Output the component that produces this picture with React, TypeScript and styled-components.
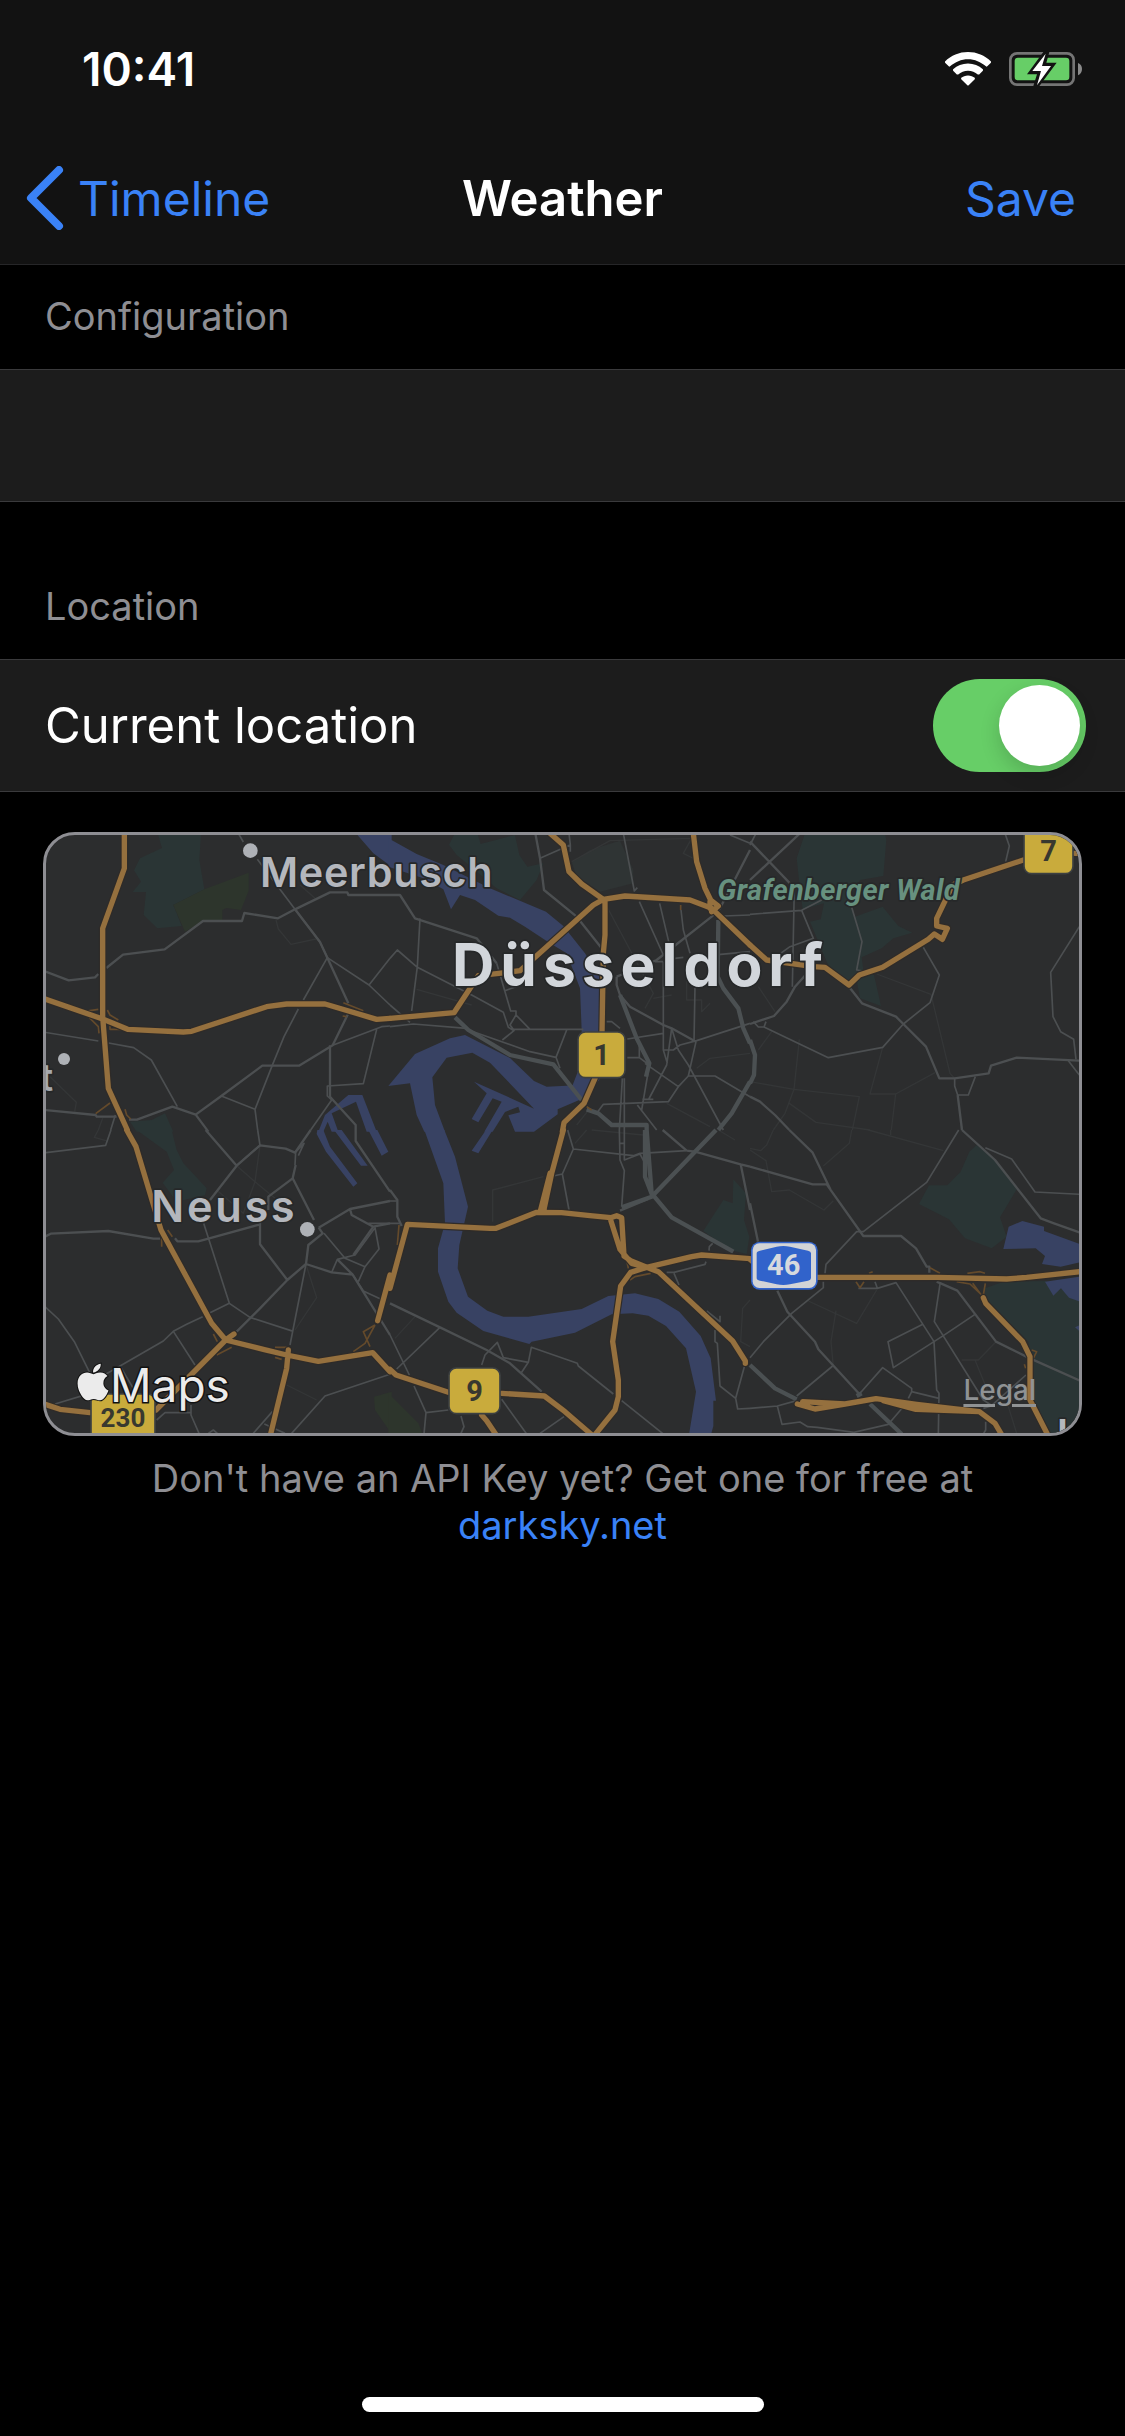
import React, { useState } from "react";
import styled, { createGlobalStyle } from "styled-components";
import { FaApple } from "react-icons/fa";

const color = {
  bar: "#121212",
  row: "#1c1c1c",
  hairline: "#3a3a3c",
  barLine: "#262628",
  secondary: "#8e8e93",
  blue: "#3a82f7",
  green: "#67ce67",
};

const GlobalStyle = createGlobalStyle`
  *, *::before, *::after { box-sizing: border-box; }
  body { margin: 0; background: #000; }
  button, input { font: inherit; color: inherit; }
`;

const Screen = styled.div`
  display: flex;
  flex-direction: column;
  min-height: 100vh;
  background: #000;
  color: #fff;
  font-family: Inter, "Liberation Sans", sans-serif;
  font-size: 49px;
`;

const Header = styled.header`
  background: ${color.bar};
  border-bottom: 1px solid ${color.barLine};
`;

const StatusBar = styled.div`
  display: flex;
  align-items: center;
  justify-content: space-between;
  height: 132px;
  padding: 6px 43px 0 82px;
`;

const Clock = styled.time`
  font-size: 46px;
  font-weight: 600;
`;

const StatusIcons = styled.div`
  display: flex;
  align-items: center;
  gap: 18px;
`;

const NavBar = styled.nav`
  display: grid;
  grid-template-columns: 1fr auto 1fr;
  align-items: center;
  height: 132px;
  padding: 0 26px;
`;

const Title = styled.h1`
  margin: 0;
  font-size: 49px;
  font-weight: 600;
`;

const BarButton = styled.button<{ $end?: boolean }>`
  display: flex;
  align-items: center;
  gap: 14px;
  justify-self: ${(p) => (p.$end ? "end" : "start")};
  padding: 0 ${(p) => (p.$end ? "23px" : "0")} 0 0;
  border: 0;
  background: none;
  color: ${color.blue};
  font-size: 48px;
  cursor: pointer;
`;

const Main = styled.main`
  flex: 1;
`;

const Section = styled.section`
  & + & {
    margin-top: 53px;
  }
`;

const SectionTitle = styled.h2`
  display: flex;
  align-items: center;
  height: 104px;
  margin: 0;
  padding: 0 45px 2px;
  color: ${color.secondary};
  font-size: 38px;
  font-weight: 400;
`;

const Row = styled.div`
  display: flex;
  align-items: center;
  justify-content: space-between;
  height: 133px;
  padding: 0 39px 0 45px;
  background: ${color.row};
  border: solid ${color.hairline};
  border-width: 1px 0;
`;

const KeyField = styled.input`
  flex: 1;
  min-width: 0;
  height: 100%;
  padding: 0;
  border: 0;
  outline: 0;
  background: transparent;
`;

const Toggle = styled.input`
  appearance: none;
  display: flex;
  width: 153px;
  height: 93px;
  margin: 0;
  padding: 6px;
  border-radius: 47px;
  background: #39393d;
  cursor: pointer;

  &::before {
    content: "";
    width: 81px;
    height: 81px;
    border-radius: 50%;
    background: #fff;
    box-shadow: 0 8px 20px rgba(0, 0, 0, 0.16);
  }
  &:checked {
    justify-content: flex-end;
    background: ${color.green};
  }
`;

const MapFrame = styled.div`
  position: relative;
  margin: 40px 43px 0;
  border: 3px solid ${color.secondary};
  border-radius: 32px;
  overflow: hidden;
  background: #2c2d2e;
`;

const MapDrawing = styled.svg`
  display: block;
  width: 100%;
  height: auto;
`;

const MapCredits = styled.div`
  position: absolute;
  left: 30px;
  right: 43px;
  bottom: 16px;
  display: flex;
  align-items: flex-end;
  justify-content: space-between;
`;

const MapsBrand = styled.span`
  display: flex;
  align-items: flex-end;
  color: #ebebeb;
  font-size: 46px;
  line-height: 56px;
  padding-bottom: 4px;
  font-weight: 400;
  -webkit-text-stroke: 3px #111;
  paint-order: stroke fill;

  svg {
    width: 34px;
    height: 42px;
    margin-bottom: 10px;
    overflow: visible;
    stroke: #111;
    stroke-width: 24px;
    paint-order: stroke;
  }
`;

const LegalLink = styled.a`
  padding-bottom: 10px;
  color: #8f9294;
  font-size: 28px;
  font-weight: 500;
  text-decoration: underline;
  text-decoration-thickness: 3px;
  text-underline-offset: 4px;
`;

const Note = styled.p`
  margin: 19px 43px 0;
  color: ${color.secondary};
  font-size: 38px;
  line-height: 47px;
  text-align: center;
`;

const NoteLink = styled.a`
  display: block;
  color: ${color.blue};
  text-decoration: none;
`;

const HomeArea = styled.footer`
  display: flex;
  justify-content: center;
  padding-bottom: 24px;
`;

const HomeIndicator = styled.div`
  width: 402px;
  height: 15px;
  border-radius: 8px;
  background: #fff;
`;

/* The map is drawn as six adjoining sheets, each with its own origin. */
type Layer = "park" | "scrub" | "grove" | "water" | "faint" | "minor" | "major" | "heavy" | "ramp" | "highway";
type Sheet = { x: number; y: number } & Partial<Record<Layer, string>>;

const sheets: Sheet[] = [
  {
    x: 0,
    y: 0,
    park: "M383 40H513L508 120L523 208L430 255L455 318L382 325L341 285L348 216H308L333 185L312 151L330 115L396 84ZM300 905L365 900L405 880L430 935H320Z",
    grove: "M430 255L523 208L656 158V212L633 270L590 264L577 270V302L520 303L465 335Z",
    water: "M978 40H1085V140L1030 100ZM865 935L885 885L955 825H997L1040 935H1010L978 845L905 880L925 935H905L893 905L880 935Z",
    minor: "M625 40L640 66M682 118L795 268L870 366L892 413L820 540M45 637L205 663M236 669L311 683L364 720L442 860M805 567L762 650L728 733L675 868L683 930M892 413L1017 495L1080 555M1017 495L1080 415M574 828L675 868M908 676L1055 620L1080 618M1040 628L1000 791L892 798V828L905 840L842 930M256 885L242 930",
    major: "M795 268L870 366L892 413L955 550M45 454L116 481L195 472L205 462M229 444L279 404L404 388L519 303H636L643 279L744 295L795 268L900 217H952L955 225H1080M955 580L908 676L807 737H728L697 737L574 828L497 884L427 860L321 899H297M497 884L535 935M900 676V830L977 915V930M45 870L197 885L200 890H260",
    faint: "M60 770L139 847L134 875M738 300L745 327L783 373L858 357M810 195L855 235M218 895L205 930",
    ramp: "M160 575L205 568M165 580L205 620L207 640M232 570L240 585L265 600M240 610V628H275M240 849L197 881M940 548L1000 572M938 588L950 590M285 868L290 885L302 897",
    highway: "M283 40V145L218 325V590L235 805L292 930M45 537L218 597L293 628L460 636L485 634L710 560L770 552H885L1040 598L1080 595",
  },
  {
    x: 1080,
    y: 0,
    park: "M195 40H262L272 72L375 45L388 105L412 140L460 130L440 180L390 240L320 205L200 105L177 74Z",
    scrub: "M545 125L600 90L690 62L730 150V190L630 215L560 170Z",
    water: "M-5 55L80 102L160 135L300 205L468 275L520 318L585 400L628 470V780L580 835L503 868V883L432 935H375L355 886L390 877L385 860L345 876L308 935H283L335 845L308 835L265 907L245 897L290 820L252 785L432 866L300 728L247 698L170 713L127 772L135 855L165 935H103L80 885L60 790L-5 798L75 702L180 655L225 645L360 714L432 783L470 800L530 797L548 795L575 725V630L570 505L530 400L480 370L405 320L360 293L325 287L255 240L210 225L183 268L160 208L100 175L-5 140Z",
    minor: "M450 115L540 75M537 40L541 75V95M700 40L733 213L742 203M748 245L820 405M809 250L838 373M873 270L880 330L900 400M90 295L82 440L65 573M0 415L22 390L82 442L245 525L340 577L355 622L372 632L337 660M0 555L60 607M0 620L70 612L230 625M235 630L420 695L498 712L510 745M345 512L378 500M320 430L345 515L362 573H378V585L360 615L370 628H580M378 585L420 628M530 630L498 712M820 425V690H850L870 675L920 662L1080 610M915 500L912 665M820 640L712 657M820 690L832 730M845 625L865 690L895 735L1000 930M845 625L830 735L775 840M918 665L895 768L865 800L835 845L640 853L620 880M895 768H975L1080 830M765 730L865 800M748 675V713H712M748 713L778 735L755 870M742 855L800 930M697 775L688 930M703 775V930M757 838H790M795 425H820M1020 45L1080 70M1000 288L1080 285M855 415L880 412M920 410L1080 395M650 605H665L690 625",
    major: "M436 40L450 115L462 210L560 290L635 385M0 225H30L75 295L260 355L320 430M680 470V495L690 525L720 560L820 615L845 625L918 665M680 470L730 450L800 420L965 290L990 265L1080 90",
    heavy: "M195 592L235 630L360 705L490 733L575 840M985 300L983 470L1000 505L1045 565L1060 625L1080 670M590 868L625 880L665 915H770V930M985 930L1025 880L1080 785M690 525L740 655L778 730L768 770",
    faint: "M545 125L660 62L905 55L880 100L920 120M640 240L790 520L765 565M790 535L845 525M890 440V540H935V575L960 550M80 508L245 555M920 745L960 715L1080 700M830 850L960 920M560 915L600 865",
    ramp: "M872 255V270M590 860L605 870",
    highway: "M480 40L520 75L537 155L575 192L640 238L610 255L390 452L320 461L265 467L192 578L0 595M640 238L705 228L900 240L965 265L1080 375M645 240V345L640 400L636 640M910 40L920 125L945 205L962 240L985 258L965 275M960 245V265M615 775L582 850L522 908L517 935",
  },
  {
    x: 2160,
    y: 0,
    park: "M165 40H405L409 60L400 168L330 180L300 230L315 290L398 260L445 318L487 338L430 355L395 385L335 412L340 450L372 465L393 558L330 535L320 480L290 500L232 430L180 305L212 298L222 250L158 268L147 180L140 115Z",
    minor: "M18 40L0 75M0 283L155 271L215 240M133 200L127 500M155 271L190 355L120 380L78 410M305 262L336 365L320 450L340 453M520 382L568 465L540 548L460 612L398 682L235 713L42 621L48 605M42 621H25L10 605M765 40L778 78L767 125M988 320L902 457L909 590L932 635L971 658L978 718M955 722L988 765M614 775V798L623 825H655L676 770",
    major: "M0 65L120 190M0 180L150 40M297 500L336 550L438 590L460 612L528 680L568 775H614L716 760L723 737L800 713L988 722M623 825L636 930M0 612L72 588L110 545L135 500L178 452M0 830L30 845L75 885L118 930",
    heavy: "M0 660L15 705L12 765L0 790",
    faint: "M380 462L543 523L600 760L614 775M398 682L360 822H437L555 758M437 822L424 930M148 658L132 808L105 880L70 930M0 785L132 808L328 830L307 930M118 850L198 907L360 930M25 690L65 635M25 500L75 575",
    highway: "M0 375L50 420L190 440L225 442L297 495L328 465L398 442L535 358L553 342L577 358L592 325L560 318V295L608 195L640 180L820 120M975 100H990",
  },
  {
    x: 0,
    y: 930,
    park: "M320 0H425L440 60L460 100L530 175L525 195L440 215L398 158L432 120L410 65Z",
    grove: "M1032 800L1085 785V912L1035 840Z",
    water: "M862 0H880L900 50L982 160L970 170L888 65L860 12ZM912 0H935L1013 107H993ZM1015 0H1042L1075 65L1055 77Z",
    minor: "M45 68L227 46L243 0M683 0L690 46L620 107M795 68L822 40L805 77M797 65L795 105M1015 280H1080M905 427L922 388L975 375L1035 293L1047 357L1005 410L985 455M882 310L945 385L1005 410M968 434L1000 483L1050 506M828 402L780 645M521 280L598 520L660 562L790 604M598 520L540 548M518 560L470 583L430 604L400 633L270 708L180 760M430 604L495 705M45 530L85 567L133 635L195 760M270 708L310 775M75 822L180 790M380 870L405 848H483V855L507 910M483 848V825M535 910L550 900L562 910M670 910L727 845M785 910L885 798L1080 733M703 882L765 910",
    major: "M527 0L620 107L540 210M620 107L690 46L767 56L795 68L842 0M797 105L788 145L715 200V240M788 145L852 270M977 0V33L1080 185M866 293L960 237L1080 213M960 237L965 255L1030 290L1080 280M866 293L878 310L835 345L828 402L772 450L690 343V270M828 402L905 427L968 434M922 388L968 434L1080 615M772 450L690 535L620 605M45 320L62 311L235 303L370 326H390M435 325L442 334H505L690 283M1030 290L970 375",
    faint: "M205 0L193 22L228 32M690 46L675 155L620 107M675 155L735 205M675 155L640 250L560 180M830 410L860 503L795 600M770 765L860 810",
    ramp: "M413 300L427 320M395 325V350M550 612L562 635M560 675L605 652M735 652H770M735 682L755 688M1035 585L1000 605L1020 650M1035 585L1005 640L970 665",
    highway: "M290 0L318 50L393 300L545 580L587 630L378 840M587 630L612 612M587 630L700 658L770 675L865 694L1028 668L1080 725M45 823L90 838L180 848M775 660L770 715L722 912M1080 435L1043 572",
  },
  {
    x: 1080,
    y: 930,
    park: "M1030 148L1068 190L1062 270L1078 320L1070 372L1020 360L940 303L1000 210L1028 220Z",
    grove: "M-5 790L85 880L98 912H-5Z",
    water: "M103 0H163L195 80L234 230L208 345L203 415L234 500L292 542L340 560H415L575 537L655 498L735 490L805 507L868 545L932 618L962 685L978 812H970V888L963 914H897L918 785L888 655L828 588L775 557L728 550L665 553L555 608L425 635L418 642L280 603L200 548L175 515L144 425V355L165 280L160 160ZM245 62L288 0H308L265 70Z",
    minor: "M0 213H20M0 280H30M150 592L20 717M0 615L58 735M72 768L108 848L102 912M108 848L175 840M275 705L285 675L322 637L340 683L415 697L424 652L562 700L565 708L670 792M695 812L820 912M415 697L393 730M335 808L410 912M450 910L522 860M213 858L222 890L212 912M533 0L550 57L517 132L490 138M517 132L537 240M550 57L730 77L750 70L890 62M688 0L690 90L703 122L695 230M703 0V90L750 72M690 40H703M750 72L765 100M830 427H852L945 403L948 395M852 430L867 465M957 362L958 350L968 340M950 543L990 575V557M975 600V635L982 640L990 768L1037 805L1063 710M1037 805L1043 837L1080 835",
    major: "M0 180L22 210V260L35 288M0 520L150 592L290 660L360 700L455 785M890 62L915 65L1052 103L1080 110M818 0L890 62M1052 103L1080 240M775 207L690 242",
    heavy: "M770 0L785 190L845 262L1030 365M978 0L785 200L695 232M765 0V140L790 205",
    faint: "M308 275V180L460 140M555 40L590 0M605 0L760 15M985 0L1035 30M15 625L75 560M1080 510L1058 535L1052 635L1080 650",
    ramp: "M27 285L22 345M710 390L715 415M720 450L735 440L782 430",
    highway: "M0 475L52 283L300 295H318L440 247L515 248L600 257L662 263L680 257L695 263L702 378L722 392L770 412L805 425L1028 633L1066 693V700M520 0L485 130L460 247M480 130L452 240M662 270L690 358L725 400L770 412M1080 386L935 375L905 380L770 412L722 427L692 468L668 635L685 750V800L675 840L615 914M0 718L18 735L175 787M335 790L463 798L525 845L605 914M275 855L290 872L318 914",
  },
  {
    x: 2160,
    y: 930,
    park: "M680 45L735 90L802 175L750 262L770 320L725 355L645 325L597 268L507 222L537 166H592L632 125L658 65ZM705 475L760 455L888 453L910 495L935 475L990 515V914H895L850 820L835 635L790 590L705 505Z",
    water: "M760 357L776 290L817 273L882 290V303L990 342V397L932 410L876 402L885 378L857 355ZM885 455L990 440V515L957 503L933 475L910 497ZM975 592L990 585V605Z",
    minor: "M626 0L530 157L340 305H320L228 403L225 430M220 455V473L125 550L40 635L0 683M706 53L785 87L855 186L990 193M248 708L140 798M328 792L398 713L485 775V785L475 805M485 785L567 805M325 475H382L438 458L552 635L560 780L567 790L565 912M382 475L375 455M520 582L414 635L430 713L580 617L675 553M570 462L553 575L700 810L723 825M828 735L723 828L700 835M0 835L82 828L140 812M82 828L96 883L150 876L173 890L202 892L312 907L415 883L460 830M707 875V900L700 912",
    major: "M118 0L188 68L242 180M0 110L188 163H230L340 318H453L498 355L530 410H538V428M636 0L735 90L872 265L912 280L990 308M0 220L24 335M82 482L112 545L195 635L205 658L328 792M560 455L622 482L738 635L835 683L990 752",
    heavy: "M0 705L75 775L140 808M360 822L455 912M320 798L335 790",
    faint: "M0 60L48 92L65 185L118 180L222 240L250 212M305 0L298 40L220 108M355 0L580 62M422 0V15M175 513L320 580L380 480M258 542L243 635L250 710M738 635L685 690H635M675 690L720 800M775 830L800 910M70 0L50 45L32 62L0 55",
    ramp: "M318 455L330 473L342 455M357 430L368 425M540 413L570 430M652 430L690 425L705 430M620 455L660 462L695 495M668 460L690 490M706 460L700 495M845 660L860 665L850 685M823 703L827 715",
    highway: "M0 388L60 442H560L770 447L830 442L990 425M700 503L707 520L818 635L840 680V810L893 914M158 815L285 822L378 806L500 823L688 845L735 880L755 914M142 822L195 837L285 822M400 812L498 838L688 845",
  },
];

const areas: [Layer, string][] = [
  ["park", "#2a3535"],
  ["scrub", "#2f3434"],
  ["grove", "#2d352c"],
  ["water", "#384263"],
];

const lines: [Layer, string, number][] = [
  ["faint", "#343637", 4],
  ["minor", "#4c4f51", 5],
  ["major", "#4c4f51", 7],
  ["heavy", "#4b5052", 13],
  ["ramp", "#644a2b", 5],
];

const Label = styled.text<{ $size: number; $fill: string; $tracking?: number; $weight?: number }>`
  font-size: ${(p) => p.$size}px;
  font-weight: ${(p) => p.$weight ?? 600};
  letter-spacing: ${(p) => p.$tracking ?? 0}px;
  fill: ${(p) => p.$fill};
  stroke: #262829;
  stroke-width: 10px;
  stroke-linejoin: round;
  paint-order: stroke;
`;

const WoodLabel = styled(Label)`
  font-family: Roboto, "Liberation Sans", sans-serif;
  font-style: italic;
`;

const ShieldText = styled.text<{ $size?: number }>`
  font-family: Roboto, "Liberation Sans", sans-serif;
  font-size: ${(p) => p.$size ?? 87}px;
  font-weight: 700;
  text-anchor: middle;
`;

function RoadShield(p: { x: number; y: number; width: number; height: number; name: string; base: number; size?: number }) {
  return (
    <g>
      <rect x={p.x} y={p.y} width={p.width} height={p.height} rx={22} fill="#c9ab3c" stroke="#3d4041" strokeWidth={5} />
      <ShieldText x={p.x + p.width / 2} y={p.base} fill="#38382f" $size={p.size}>
        {p.name}
      </ShieldText>
    </g>
  );
}

function CityMap() {
  const at = (s: Sheet) => `translate(${s.x} ${s.y})`;
  return (
    <MapDrawing viewBox="48 45 3099 1794" role="img" aria-label="Map of Düsseldorf">
      {areas.map(([layer, fill]) => (
        <g key={layer} fill={fill}>
          {sheets.map((s, i) => s[layer] && <path key={i} transform={at(s)} d={s[layer]} />)}
        </g>
      ))}
      {lines.map(([layer, stroke, width]) => (
        <g key={layer} fill="none" stroke={stroke} strokeWidth={width} strokeLinejoin="round">
          {sheets.map((s, i) => s[layer] && <path key={i} transform={at(s)} d={s[layer]} />)}
        </g>
      ))}
      {[
        { stroke: "#2f2b28", width: 23 },
        { stroke: "#95703e", width: 16 },
      ].map(({ stroke, width }) => (
        <g key={stroke} fill="none" stroke={stroke} strokeWidth={width} strokeLinejoin="round" strokeLinecap="round">
          {sheets.map((s, i) => (
            <path key={i} transform={at(s)} d={s.highway} />
          ))}
        </g>
      ))}

      <g fill="#aeb1b6">
        <circle cx={661} cy={92} r={22} />
        <circle cx={102} cy={717} r={18} />
        <circle cx={832} cy={1228} r={22} />
      </g>

      <WoodLabel x={2062} y={240} $size={87} $fill="#67917f" $weight={700} $tracking={1}>Grafenberger Wald</WoodLabel>
      <Label x={690} y={201} $size={124} $fill="#b4b7bd" $tracking={2}>Meerbusch</Label>
      <Label x={364} y={1207} $size={130} $fill="#b4b7bd" $tracking={8}>Neuss</Label>
      <Label x={1266} y={498} $size={176} $fill="#d2d6db" $weight={700} $tracking={18}>Düsseldorf</Label>
      <Label x={30} y={814} $size={112} $fill="#a6a9ad">t</Label>
      <Label x={3080} y={1888} $size={124} $fill="#b4b7bd">L</Label>

      <RoadShield x={1644} y={636} width={141} height={137} name="1" base={735} />
      <RoadShield x={2982} y={20} width={147} height={141} name="7" base={123} />
      <RoadShield x={1257} y={1644} width={153} height={137} name="9" base={1742} />
      <RoadShield x={183} y={1722} width={192} height={140} name="230" base={1820} size={78} />

      <rect x={2163} y={1265} width={200} height={144} rx={26} fill="#3465cc" />
      <rect x={2168} y={1270} width={190} height={134} rx={20} fill="#d3d4d6" />
      <path d="M2180 1300Q2180 1294 2190 1292L2240 1280Q2260 1276 2280 1280L2334 1292Q2343 1294 2343 1300V1374Q2343 1380 2334 1382L2280 1393Q2260 1397 2240 1393L2190 1382Q2180 1380 2180 1374Z" fill="#3163cb" />
      <ShieldText x={2261} y={1365} fill="#d6d9de">46</ShieldText>
    </MapDrawing>
  );
}

function WifiIcon() {
  return (
    <svg width="46" height="34" viewBox="0 0 136 100" fill="#fff" aria-hidden="true">
      <path d="M68 0C94 0 118 10 136 28Q137 30 135 32L125 42Q123 44 121 42C106 29 88 21 68 21S30 29 15 42Q13 44 11 42L1 32Q-1 30 0 28C18 10 42 0 68 0Z" />
      <path d="M68 34C85 34 100 40 112 51Q113 53 112 55L101 66Q99 67 97 66C89 59 79 55 68 55S47 59 39 66Q37 67 35 66L24 55Q23 53 24 51C36 40 51 34 68 34Z" />
      <path d="M68 69C76 69 83 72 88 76Q89 78 88 80L70 98Q68 100 66 98L48 80Q47 78 48 76C53 72 60 69 68 69Z" />
    </svg>
  );
}

function BatteryIcon() {
  return (
    <svg width="73" height="34" viewBox="0 0 219 102" aria-hidden="true">
      <rect x="4" y="4" width="190" height="94" rx="20" fill="none" stroke="#757575" strokeWidth="8" />
      <path d="M207 33Q219 38 219 51T207 70Z" fill="#8a8a8a" />
      <rect x="17" y="17" width="164" height="68" rx="10" fill="#67ce67" />
      <path d="M103 0L54 67H84L73 102H91L143 32H112L121 0Z" fill="#121212" />
      <path d="M110 5L70 57H96L84 100L126 42H99Z" fill="#fff" />
    </svg>
  );
}

function BackChevron() {
  return (
    <svg width="38" height="64" viewBox="0 0 38 64" fill="none" stroke="currentColor" strokeWidth="8" strokeLinecap="round" strokeLinejoin="round" aria-hidden="true">
      <path d="M33 4L5 32L33 60" />
    </svg>
  );
}

export default function App() {
  const [apiKey, setApiKey] = useState("");
  const [useCurrent, setUseCurrent] = useState(true);

  return (
    <Screen>
      <GlobalStyle />
      <Header>
        <StatusBar>
          <Clock>10:41</Clock>
          <StatusIcons>
            <WifiIcon />
            <BatteryIcon />
          </StatusIcons>
        </StatusBar>
        <NavBar>
          <BarButton type="button">
            <BackChevron />
            Timeline
          </BarButton>
          <Title>Weather</Title>
          <BarButton type="button" $end>
            Save
          </BarButton>
        </NavBar>
      </Header>

      <Main>
        <Section>
          <SectionTitle>Configuration</SectionTitle>
          <Row>
            <KeyField aria-label="API Key" value={apiKey} onChange={(e) => setApiKey(e.target.value)} />
          </Row>
        </Section>

        <Section>
          <SectionTitle>Location</SectionTitle>
          <Row>
            <label htmlFor="current-location">Current location</label>
            <Toggle
              id="current-location"
              type="checkbox"
              role="switch"
              checked={useCurrent}
              onChange={(e) => setUseCurrent(e.target.checked)}
            />
          </Row>
          <MapFrame>
            <CityMap />
            <MapCredits>
              <MapsBrand>
                <FaApple aria-hidden="true" />
                Maps
              </MapsBrand>
              <LegalLink href="#legal">Legal</LegalLink>
            </MapCredits>
          </MapFrame>
          <Note>
            Don't have an API Key yet? Get one for free at
            <NoteLink href="#darksky">darksky.net</NoteLink>
          </Note>
        </Section>
      </Main>

      <HomeArea>
        <HomeIndicator />
      </HomeArea>
    </Screen>
  );
}
